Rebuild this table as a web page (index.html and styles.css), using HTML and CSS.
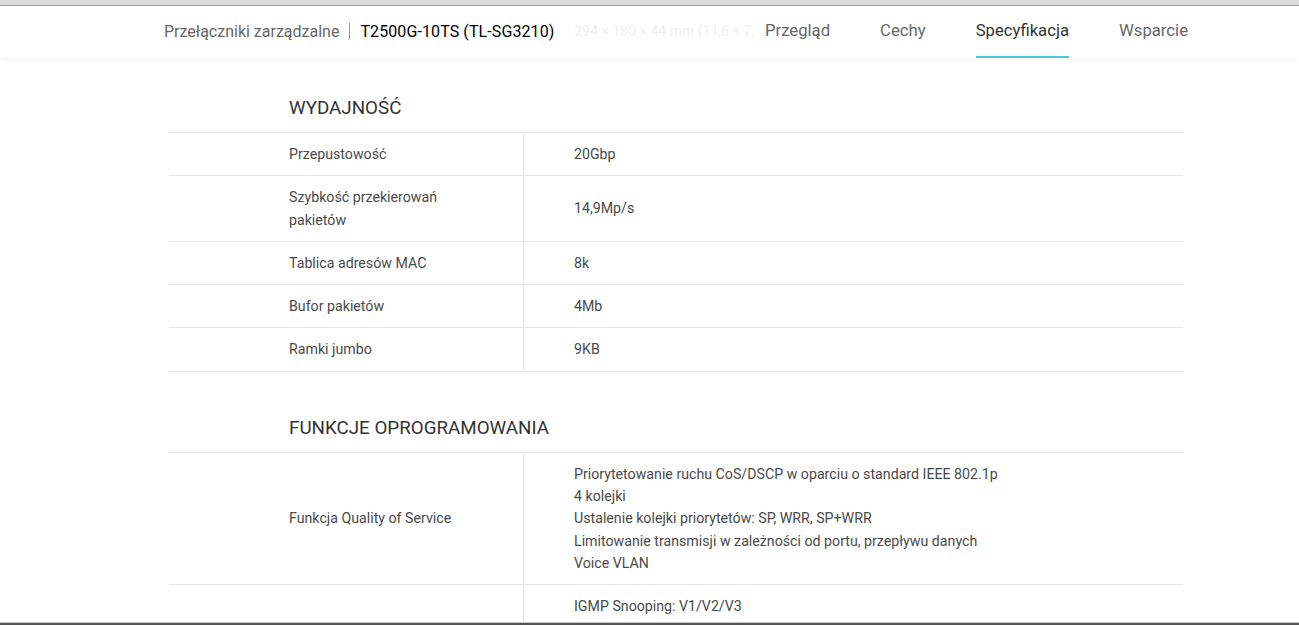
FILE: index.html
```html
<!DOCTYPE html>
<html lang="pl">
<head>
<meta charset="utf-8">
<title>T2500G-10TS (TL-SG3210) - Specyfikacja</title>
<link rel="stylesheet" href="styles.css">
</head>
<body>
<div class="chrome-top"></div>
<header class="topbar">
  <div class="topbar-inner">
    <div class="crumbs">
      <span class="crumb-cat">Przełączniki zarządzalne</span>
      <span class="crumb-sep"></span>
      <span class="crumb-model">T2500G-10TS (TL-SG3210)</span>
      <span class="ghost">294 × 180 × 44 mm (11,6 × 7,1 × 1,7 in)</span>
    </div>
    <nav class="tabs">
      <a class="tab">Przegląd</a>
      <a class="tab">Cechy</a>
      <a class="tab active">Specyfikacja</a>
      <a class="tab">Wsparcie</a>
    </nav>
  </div>
</header>
<main class="main">
  <section class="spec">
    <h2 class="spec-title">WYDAJNOŚĆ</h2>
    <div class="spec-table">
      <div class="row"><div class="label">Przepustowość</div><div class="value">20Gbp</div></div>
      <div class="row"><div class="label">Szybkość przekierowań<br>pakietów</div><div class="value">14,9Mp/s</div></div>
      <div class="row"><div class="label">Tablica adresów MAC</div><div class="value">8k</div></div>
      <div class="row"><div class="label">Bufor pakietów</div><div class="value">4Mb</div></div>
      <div class="row"><div class="label">Ramki jumbo</div><div class="value">9KB</div></div>
    </div>
  </section>
  <section class="spec">
    <h2 class="spec-title">FUNKCJE OPROGRAMOWANIA</h2>
    <div class="spec-table">
      <div class="row"><div class="label">Funkcja Quality of Service</div><div class="value">Priorytetowanie ruchu CoS/DSCP w oparciu o standard IEEE 802.1p<br>4 kolejki<br>Ustalenie kolejki priorytetów: SP, WRR, SP+WRR<br>Limitowanie transmisji w zależności od portu, przepływu danych<br>Voice VLAN</div></div>
      <div class="row"><div class="label">Multicast</div><div class="value">IGMP Snooping: V1/V2/V3<br>MLD v1/v2 Snooping<br>Multicast VLAN Registration (MVR)<br>Filtrowanie multicast</div></div>
    </div>
  </section>
</main>
<div class="chrome-bottom"></div>
</body>
</html>
```
FILE: styles.css
```css
html, body {
  margin: 0;
  padding: 0;
  background: #fff;
  font-family: Roboto, "Liberation Sans", Arial, sans-serif;
  color: #4a4a4a;
  overflow: hidden;
}
.chrome-top {
  height: 5px;
  background: #dcdcdc;
  border-bottom: 1px solid #9c9c9c;
}
.topbar {
  background: #fff;
  height: 52px;
  box-shadow: 0 2px 4px rgba(0,0,0,0.04);
  position: relative;
  z-index: 2;
}
.topbar-inner {
  width: 1024px;
  margin-left: 164px;
  height: 52px;
  display: flex;
  align-items: stretch;
  justify-content: space-between;
}
.crumbs {
  display: flex;
  align-items: center;
  font-size: 16px;
  white-space: nowrap;
  padding-bottom: 2px;
}
.crumb-cat { color: #666; }
.crumb-sep {
  width: 1px;
  height: 16px;
  background: #999;
  margin: 0 10px 0 10px;
}
.crumb-model { color: #000; letter-spacing: 0.1px; }
.ghost {
  color: #f1f1f1;
  margin-left: 20px;
  font-size: 14px;
  width: 180px;
  overflow: hidden;
}
.tabs {
  display: flex;
  gap: 50px;
}
.tab {
  font-size: 16.7px;
  color: #666;
  display: flex;
  align-items: center;
  padding-bottom: 2px;
  border-bottom: 2px solid transparent;
  cursor: pointer;
}
.tab.active {
  color: #333;
  border-bottom-color: #4acbd6;
}
.main {
  width: 1014px;
  margin-left: 169px;
  padding-top: 38px;
}
.spec + .spec { margin-top: 44px; }
.spec-title {
  margin: 0 0 12px 120px;
  font-size: 18.8px;
  line-height: 24px;
  font-weight: 400;
  color: #333;
}
.spec-table { border-top: 1px solid #e6e6e6; }
.row {
  display: grid;
  grid-template-columns: 355px 1fr;
  border-bottom: 1px solid #e6e6e6;
  font-size: 14.2px;
  line-height: 22.3px;
}
.label {
  padding: 10px 20px 10px 120px;
  border-right: 1px solid #e6e6e6;
  display: flex;
  align-items: center;
}
.value {
  padding: 10px 20px 10px 50px;
  display: flex;
  align-items: center;
}
.chrome-bottom {
  position: fixed;
  left: 0;
  right: 0;
  bottom: 0;
  height: 2px;
  background: #555;
  border-top: 1px solid #c8c8c8;
  z-index: 5;
}
```
